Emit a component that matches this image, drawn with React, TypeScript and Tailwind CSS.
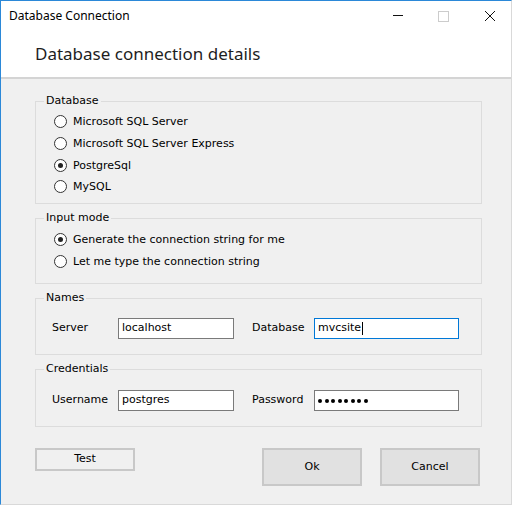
import React from "react";

const body = { fontFamily: '"DejaVu Sans", Verdana, sans-serif' };

function Radio({ label, checked = false }: { label: string; checked?: boolean }) {
  return (
    <div className="flex h-[21.7px] items-center gap-[6px] pl-[10px]">
      <span className="flex h-[13px] w-[13px] shrink-0 items-center justify-center rounded-full border border-[#333333] bg-white">
        {checked && <span className="h-[5px] w-[5px] rounded-full bg-[#222222]" />}
      </span>
      <span className="text-[11px] leading-[13px] text-black">{label}</span>
    </div>
  );
}

function Group({ title, className, children }: { title: string; className: string; children: React.ReactNode }) {
  return (
    <fieldset className={`border border-[#dcdcdc] pl-[8px] ${className}`}>
      <legend className="px-[2px] text-[11px] leading-[12px] text-black">{title}</legend>
      {children}
    </fieldset>
  );
}

function Field({
  label,
  value,
  labelW,
  inputW,
  focused = false,
  password = false,
}: {
  label: string;
  value: string;
  labelW: string;
  inputW: string;
  focused?: boolean;
  password?: boolean;
}) {
  return (
    <div className="flex items-center">
      <span className={`${labelW} text-[11px] text-black`}>{label}</span>
      <div
        className={`flex h-[21px] items-center border bg-white px-[3px] text-[11px] text-black ${inputW} ${
          focused ? "border-[#0078d7]" : "border-[#7a7a7a]"
        }`}
      >
        {password ? (
          <div className="flex gap-[2.5px]">
            {[0, 1, 2, 3, 4, 5, 6, 7].map((i) => (
              <span key={i} className="h-[4px] w-[4px] rounded-full bg-black" />
            ))}
          </div>
        ) : (
          value
        )}
        {focused && <span className="ml-[1px] h-[13px] w-px bg-black" />}
      </div>
    </div>
  );
}

export default function App() {
  return (
    <div
      className="flex h-[505px] w-[512px] flex-col border-l border-t border-r border-b border-l-[#2b88d8] border-t-[#2b88d8] border-r-[#d9d9d9] border-b-[#d9d9d9] bg-[#f0f0f0]"
      style={body}
    >
      <div className="flex h-[29px] shrink-0 items-center bg-white pl-[8px]">
        <span className="text-[12px] text-black" style={{ fontFamily: '"Noto Sans", "Open Sans", sans-serif' }}>
          Database Connection
        </span>
        <div className="ml-auto flex h-full items-center">
          <svg width="46" height="29" viewBox="0 0 46 29">
            <line x1="20" y1="14.5" x2="30" y2="14.5" stroke="#111" strokeWidth="1" />
          </svg>
          <svg width="46" height="29" viewBox="0 0 46 29">
            <rect x="19.5" y="10.5" width="10" height="10" fill="none" stroke="#cccccc" strokeWidth="1" />
          </svg>
          <svg width="46" height="29" viewBox="0 0 46 29">
            <path d="M20 10 L30 20 M30 10 L20 20" stroke="#111" strokeWidth="1" />
          </svg>
        </div>
      </div>
      <div className="flex h-[49px] shrink-0 items-center border-b-2 border-[#d4d4d4] bg-white pl-[34px] pt-[1px]">
        <span className="text-[17px] text-[#1e1e1e]" style={{ fontFamily: '"Noto Sans", "Open Sans", sans-serif' }}>
          Database connection details
        </span>
      </div>
      <div className="flex flex-col gap-[8px] pl-[34px] pt-[16px]">
        <Group title="Database" className="h-[109px] w-[447px]">
          <div className="pt-[4px]">
            <Radio label="Microsoft SQL Server" />
            <Radio label="Microsoft SQL Server Express" />
            <Radio label="PostgreSql" checked />
            <Radio label="MySQL" />
          </div>
        </Group>
        <Group title="Input mode" className="h-[72px] w-[447px]">
          <div className="pt-[5px]">
            <Radio label="Generate the connection string for me" checked />
            <Radio label="Let me type the connection string" />
          </div>
        </Group>
        <Group title="Names" className="h-[63px] w-[447px]">
          <div className="flex gap-[18px] pl-[8px] pt-[14px]">
            <Field label="Server" value="localhost" labelW="w-[66px]" inputW="w-[116px]" />
            <Field label="Database" value="mvcsite" labelW="w-[62px]" inputW="w-[145px]" focused />
          </div>
        </Group>
        <Group title="Credentials" className="h-[64px] w-[447px]">
          <div className="flex gap-[18px] pl-[8px] pt-[15px]">
            <Field label="Username" value="postgres" labelW="w-[66px]" inputW="w-[116px]" />
            <Field label="Password" value="" labelW="w-[62px]" inputW="w-[145px]" password />
          </div>
        </Group>
      </div>
      <div className="flex items-start pl-[34px] pt-[21px]">
        <button className="h-[23px] w-[100px] border-2 border-[#c8c8c8] bg-[#f0f0f0] text-[11px] text-black">Test</button>
        <button className="ml-[127px] h-[38px] w-[100px] border-2 border-[#c8c8c8] bg-[#e1e1e1] text-[11px] text-black">Ok</button>
        <button className="ml-[18px] h-[38px] w-[100px] border-2 border-[#c8c8c8] bg-[#e1e1e1] text-[11px] text-black">Cancel</button>
      </div>
    </div>
  );
}
